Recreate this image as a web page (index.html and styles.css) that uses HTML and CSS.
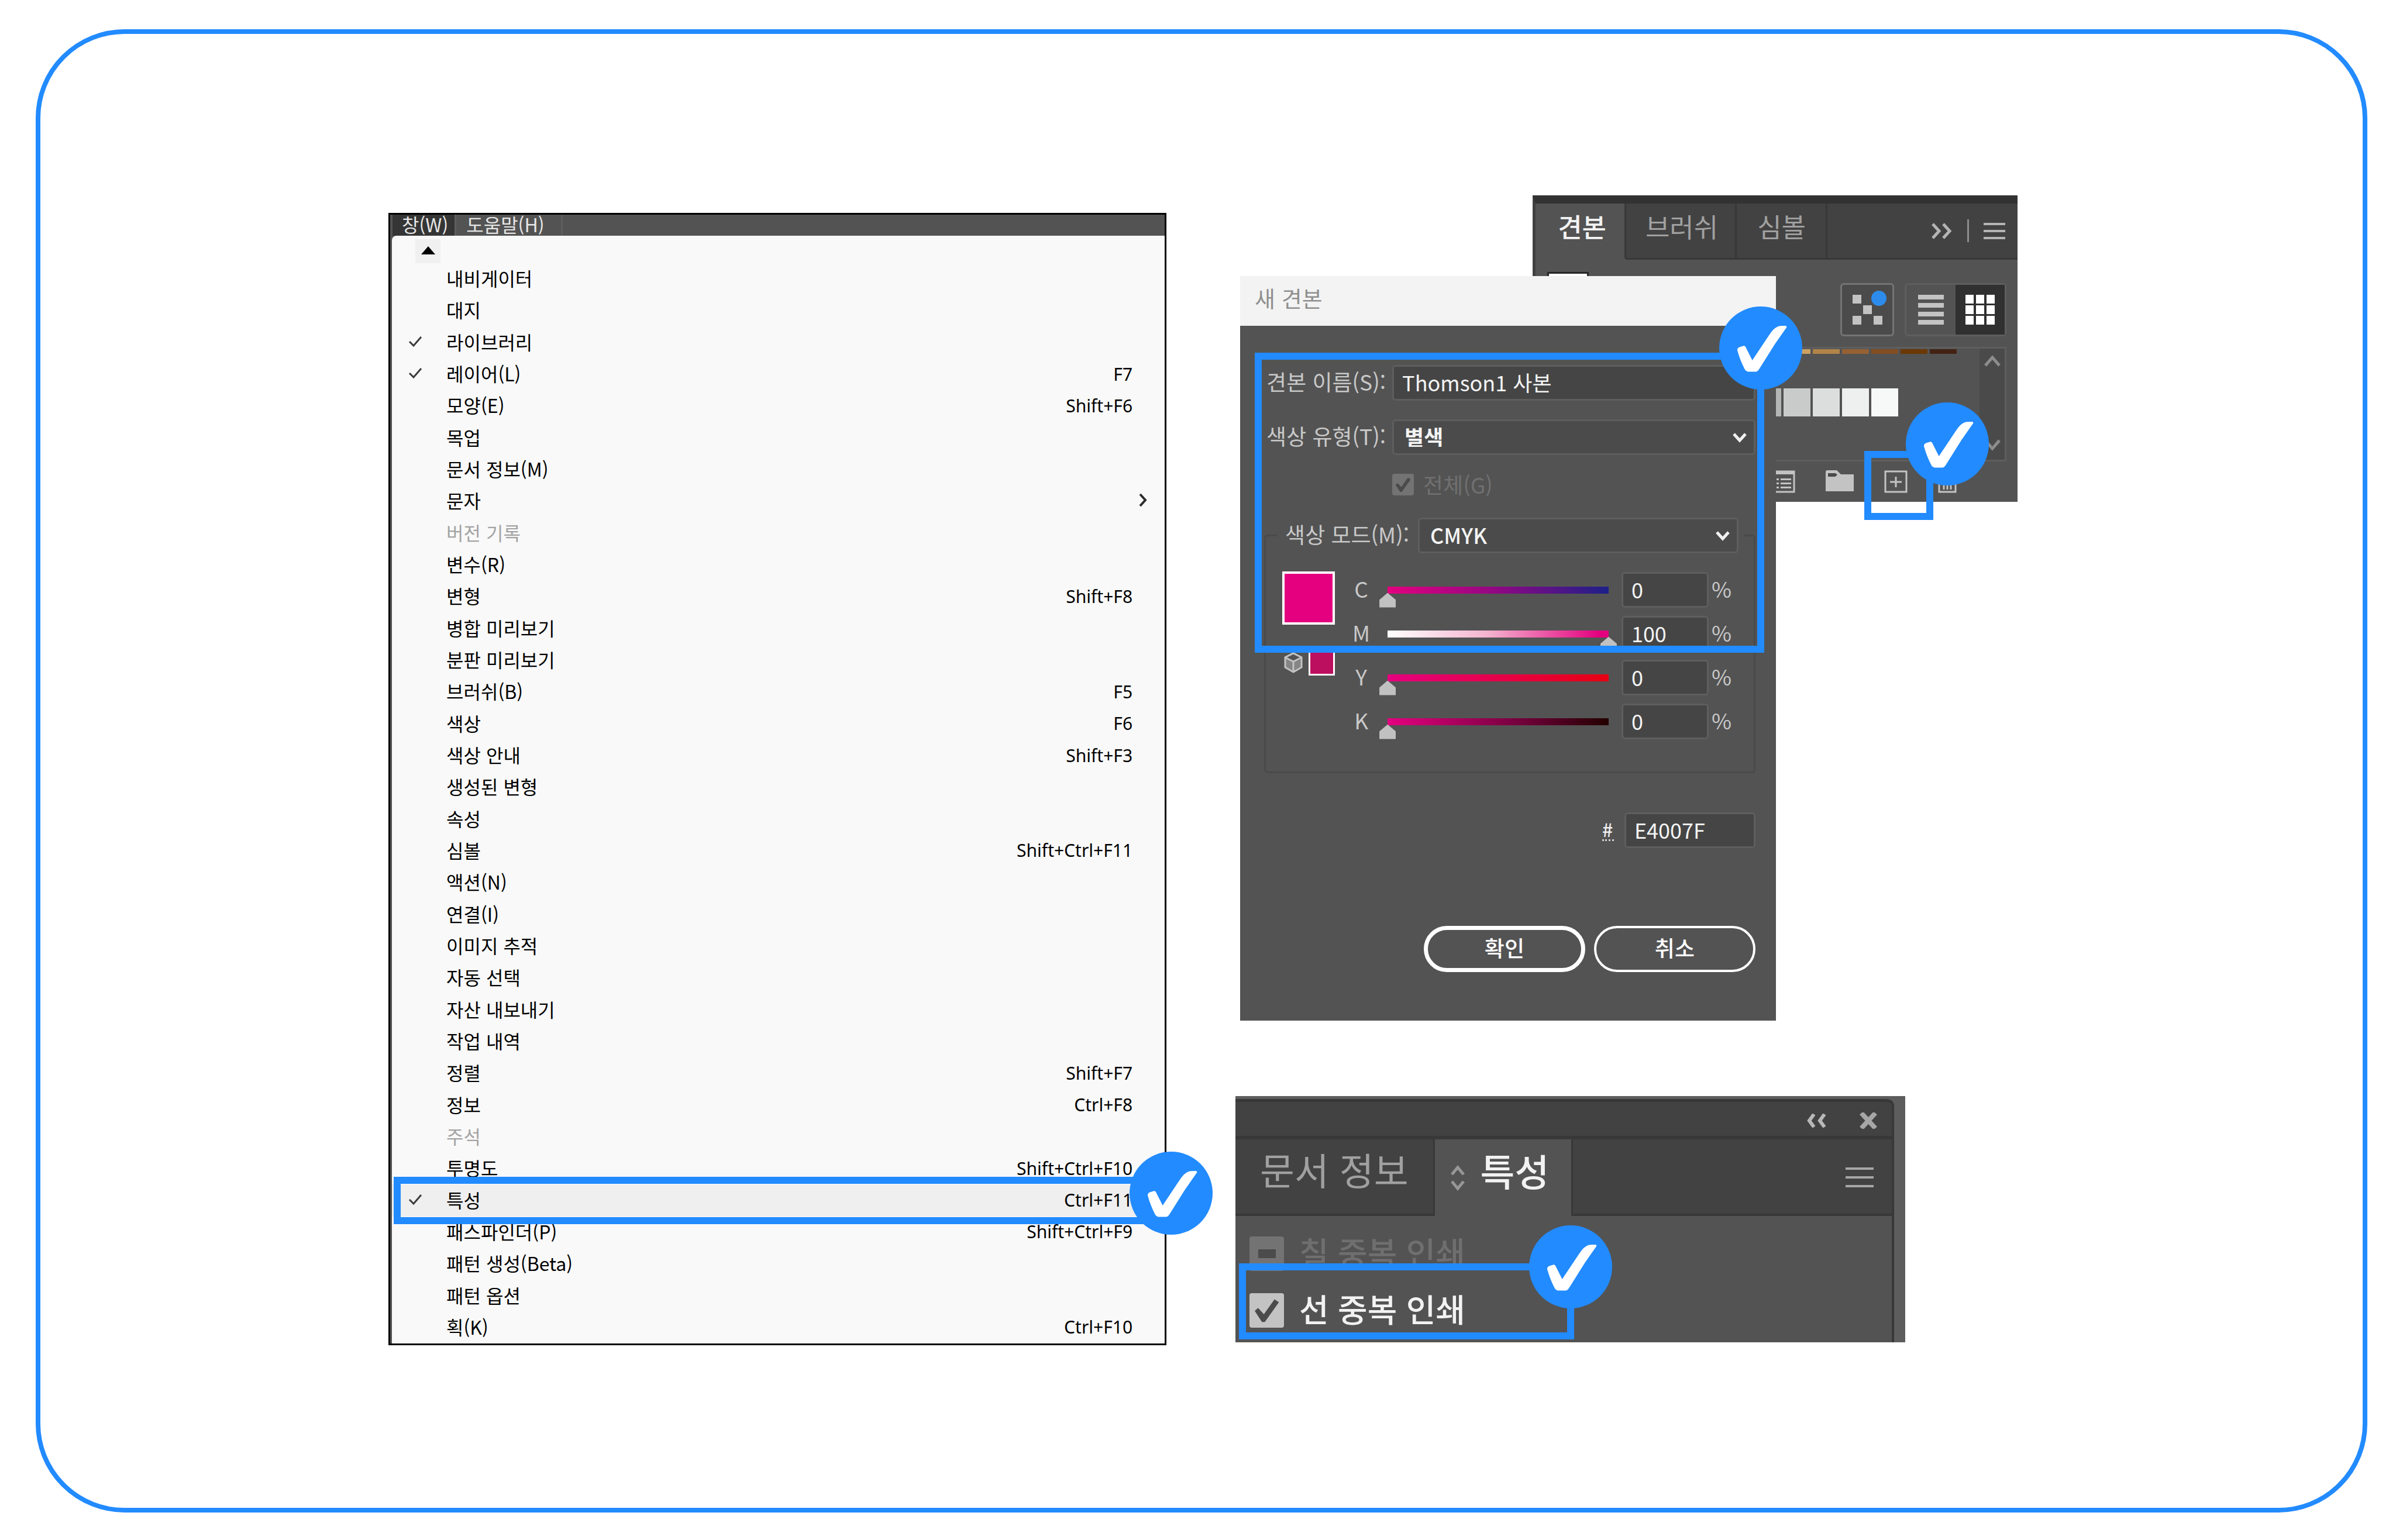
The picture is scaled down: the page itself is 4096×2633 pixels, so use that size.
FILE: index.html
```html
<!DOCTYPE html>
<html lang="ko">
<head>
<meta charset="utf-8">
<title>별색 견본과 중복 인쇄 설정</title>
<link rel="stylesheet" href="styles.css">
</head>
<body>
<svg class="defs" aria-hidden="true">
  <symbol id="badge" viewBox="0 0 142 142">
    <circle cx="71" cy="71" r="71" fill="#228bff"/>
    <path fill="#fff" d="M31 75C31 71 33 70 36 69L42 67.200Q44 67 45 69L56.600 92L86 48Q94 36 101 34Q104 33 113 33Q116 33 115 36Q108 46 95.400 64L69 106Q66 111 63 111.500H49Q46 111 44 108Q36 93 31 75Z"/>
  </symbol>
  <symbol id="tick" viewBox="0 0 24 20"><path d="M2 10L9 17L22 2" fill="none" stroke="#3c3c3c" stroke-width="3"/></symbol>
  <symbol id="down" viewBox="0 0 26 20"><path d="M3 3L13 14L23 3" fill="none" stroke="currentColor" stroke-width="5"/></symbol>
</svg>
<main class="card">
<div class="board">

  <section class="menu-window">
    <nav class="menubar">
      <button class="menubar-item is-open">창(W)</button>
      <button class="menubar-item">도움말(H)</button>
    </nav>
    <div class="menu">
      <button class="menu-scroll" aria-label="위로 스크롤"><svg width="24" height="14" viewBox="0 0 24 14"><path d="M12 0L24 14H0Z" fill="#000"/></svg></button>
      <ul class="menu-list">
        <li><button class="item"><span></span>내비게이터</button></li>
        <li><button class="item"><span></span>대지</button></li>
        <li><button class="item"><svg class="tick"><use href="#tick"/></svg>라이브러리</button></li>
        <li><button class="item"><svg class="tick"><use href="#tick"/></svg>레이어(L)<kbd>F7</kbd></button></li>
        <li><button class="item"><span></span>모양(E)<kbd>Shift+F6</kbd></button></li>
        <li><button class="item"><span></span>목업</button></li>
        <li><button class="item"><span></span>문서 정보(M)</button></li>
        <li><button class="item item-parent"><span></span>문자<svg class="more" viewBox="0 0 14 24"><path d="M2 2L11 12L2 22" fill="none" stroke="#2c2c2c" stroke-width="4"/></svg></button></li>
        <li><button class="item" disabled><span></span>버전 기록</button></li>
        <li><button class="item"><span></span>변수(R)</button></li>
        <li><button class="item"><span></span>변형<kbd>Shift+F8</kbd></button></li>
        <li><button class="item"><span></span>병합 미리보기</button></li>
        <li><button class="item"><span></span>분판 미리보기</button></li>
        <li><button class="item"><span></span>브러쉬(B)<kbd>F5</kbd></button></li>
        <li><button class="item"><span></span>색상<kbd>F6</kbd></button></li>
        <li><button class="item"><span></span>색상 안내<kbd>Shift+F3</kbd></button></li>
        <li><button class="item"><span></span>생성된 변형</button></li>
        <li><button class="item"><span></span>속성</button></li>
        <li><button class="item"><span></span>심볼<kbd>Shift+Ctrl+F11</kbd></button></li>
        <li><button class="item"><span></span>액션(N)</button></li>
        <li><button class="item"><span></span>연결(I)</button></li>
        <li><button class="item"><span></span>이미지 추적</button></li>
        <li><button class="item"><span></span>자동 선택</button></li>
        <li><button class="item"><span></span>자산 내보내기</button></li>
        <li><button class="item"><span></span>작업 내역</button></li>
        <li><button class="item"><span></span>정렬<kbd>Shift+F7</kbd></button></li>
        <li><button class="item"><span></span>정보<kbd>Ctrl+F8</kbd></button></li>
        <li><button class="item" disabled><span></span>주석</button></li>
        <li><button class="item"><span></span>투명도<kbd>Shift+Ctrl+F10</kbd></button></li>
        <li class="current"><button class="item"><svg class="tick"><use href="#tick"/></svg>특성<kbd>Ctrl+F11</kbd></button>
          <div class="mark mark-menu"><svg class="badge"><use href="#badge"/></svg></div></li>
        <li><button class="item"><span></span>패스파인더(P)<kbd>Shift+Ctrl+F9</kbd></button></li>
        <li><button class="item"><span></span>패턴 생성(Beta)</button></li>
        <li><button class="item"><span></span>패턴 옵션</button></li>
        <li><button class="item"><span></span>획(K)<kbd>Ctrl+F10</kbd></button></li>
      </ul>
    </div>
  </section>

  <div class="side">
    <div class="stack">

      <section class="swatches">
        <div class="sw-tabs">
          <button class="sw-tab is-active">견본</button>
          <button class="sw-tab">브러쉬</button>
          <button class="sw-tab">심볼</button>
          <div class="sw-tools">
            <svg width="36" height="28" viewBox="0 0 36 28" fill="none" stroke="#b4b4b4" stroke-width="5"><path d="M2 2L13 14L2 26M20 2L31 14L20 26"/></svg>
            <i class="divider"></i>
            <svg width="37" height="28" viewBox="0 0 37 28" fill="#b4b4b4"><path d="M0 0H37V4H0ZM0 12H37V16H0ZM0 24H37V28H0Z"/></svg>
          </div>
        </div>
        <div class="sw-toolbar">
          <i class="fill-chip"></i>
          <button class="tool tool-library" aria-label="라이브러리에 추가"><svg width="92" height="91" viewBox="0 0 92 91"><g fill="#c3c3c3"><path d="M21 20H36V35H21ZM39 38H54V53H39ZM21 56H36V71H21ZM57 56H72V71H57Z"/></g><circle cx="66" cy="26" r="13" fill="#2d8ceb"/></svg></button>
          <div class="views">
            <button class="view" aria-label="목록 보기"><svg width="44" height="52" viewBox="0 0 44 52" fill="#c3c3c3"><path d="M0 0H44V8H0ZM0 14H44V22H0ZM0 29H44V37H0ZM0 43H44V51H0Z"/></svg></button>
            <button class="view is-on" aria-label="격자 보기"><svg width="50" height="51" viewBox="0 0 50 51" fill="#fff"><path d="M0 0H14V15H0ZM18 0H32V15H18ZM36 0H50V15H36ZM0 18H14V33H0ZM18 18H32V33H18ZM36 18H50V33H36ZM0 36H14V51H0ZM18 36H32V51H18ZM36 36H50V51H36Z"/></svg></button>
          </div>
        </div>
        <div class="sw-list">
          <div class="chips">
            <i class="brown-1"></i><i class="brown-1"></i><i class="brown-2"></i><i class="brown-3"></i><i class="brown-4"></i><i class="brown-5"></i><i class="brown-6"></i><i class="brown-7"></i>
            <i class="gray-1"></i><i class="gray-1"></i><i class="gray-2"></i><i class="gray-3"></i><i class="gray-4"></i><i class="gray-5"></i>
          </div>
          <div class="track">
            <svg width="30" height="20" viewBox="0 0 30 20"><path d="M3 18L15 4L27 18" fill="none" stroke="#8c8c8c" stroke-width="5"/></svg>
            <svg width="30" height="20" viewBox="0 0 30 20"><path d="M3 2L15 16L27 2" fill="none" stroke="#8c8c8c" stroke-width="5"/></svg>
          </div>
        </div>
        <div class="sw-foot">
          <button class="foot" aria-label="견본 옵션"><svg width="40" height="39" viewBox="0 0 40 39"><path d="M2 2H38V37H2Z" fill="none" stroke="#c3c3c3" stroke-width="3"/><path d="M2 1H38V7H2ZM8 14H12V17H8ZM15 14H33V17H15ZM8 21H12V24H8ZM15 21H33V24H15ZM8 28H12V31H8ZM15 28H33V31H15Z" fill="#c3c3c3"/></svg></button>
          <button class="foot" aria-label="새 색상 그룹"><svg width="48" height="39" viewBox="0 0 48 39"><path d="M0 3Q0 0 3 0H19L26 7H48V36H0Z" fill="#c3c3c3"/><path d="M4 5H17L20 8L16 11H4Z" fill="#4a4a4a"/></svg></button>
          <button class="foot foot-new" aria-label="새 견본"><svg width="40" height="39" viewBox="0 0 40 39"><path d="M2 2H38V37H2Z M20 11V29M10 20H30" fill="none" stroke="#c3c3c3" stroke-width="3"/></svg>
            <span class="mark mark-new"><svg class="badge"><use href="#badge"/></svg></span></button>
          <button class="foot" aria-label="견본 삭제"><svg width="32" height="39" viewBox="0 0 32 39"><path d="M0 8H32M2 8V37H30V8M10 14V33M16 14V33M22 14V33M10 7V2H22V7" fill="none" stroke="#c3c3c3" stroke-width="3"/></svg></button>
        </div>
      </section>

      <form class="dialog" onsubmit="return false">
        <h2 class="dialog-title">새 견본</h2>
        <div class="dialog-body">
          <div class="row"><label for="name">견본 이름(S):</label><input class="field" id="name" value="Thomson1 사본"></div>
          <div class="row"><label for="type">색상 유형(T):</label>
            <div class="pick"><select class="field strong" id="type"><option>별색</option></select><svg class="caret"><use href="#down"/></svg></div></div>
          <div class="row row-check"><span></span><label class="global"><input type="checkbox" class="box" checked disabled>전체(G)</label></div>
          <fieldset class="mode">
            <legend><span class="mode-head"><label for="mode">색상 모드(M):</label>
              <span class="pick"><select class="field medium" id="mode"><option>CMYK</option></select><svg class="caret"><use href="#down"/></svg></span></span></legend>
            <div class="mixer">
              <div class="preview">
                <i class="chip-big"></i>
                <div class="gamut"><svg width="34" height="36" viewBox="0 0 34 36"><path d="M17 2L31 9V26L17 34L3 26V9Z" fill="#858585" stroke="#c3c3c3" stroke-width="3"/><path d="M3 9L17 2L31 9L17 16Z" fill="#535353"/><path d="M3 9L17 16L31 9M17 16V34M3 9L17 2L31 9" fill="none" stroke="#c3c3c3" stroke-width="3"/></svg><i class="chip-small"></i></div>
              </div>
              <div class="channels">
                <div class="channel"><label for="c">C</label><input type="range" class="ramp ramp-c" value="0" aria-label="C"><input class="field" id="c" value="0"><span>%</span></div>
                <div class="channel"><label for="m">M</label><input type="range" class="ramp ramp-m" value="100" aria-label="M"><input class="field" id="m" value="100"><span>%</span></div>
                <div class="channel"><label for="y">Y</label><input type="range" class="ramp ramp-y" value="0" aria-label="Y"><input class="field" id="y" value="0"><span>%</span></div>
                <div class="channel"><label for="k">K</label><input type="range" class="ramp ramp-k" value="0" aria-label="K"><input class="field" id="k" value="0"><span>%</span></div>
              </div>
            </div>
          </fieldset>
          <div class="hex"><label for="hex">#</label><input class="field" id="hex" value="E4007F"></div>
          <div class="actions"><button class="pill pill-ok">확인</button><button class="pill" type="button">취소</button></div>
        </div>
        <div class="mark mark-dialog"><svg class="badge"><use href="#badge"/></svg></div>
      </form>
    </div>

    <section class="attributes">
      <div class="at-frame">
        <div class="at-head">
          <svg width="36" height="24" viewBox="0 0 36 24" fill="none" stroke="#b8b8b8" stroke-width="6"><path d="M13 1L5 12L13 23M31 1L23 12L31 23"/></svg>
          <svg width="32" height="28" viewBox="0 0 32 28" fill="none" stroke="#a6a6a6" stroke-width="8"><path d="M4 1L28 27M28 1L4 27"/></svg>
        </div>
        <div class="at-tabs">
          <button class="at-tab">문서 정보</button>
          <button class="at-tab is-active"><svg width="26" height="46" viewBox="0 0 26 46" fill="none" stroke="#979797" stroke-width="5"><path d="M3 17L13 5L23 17M3 29L13 41L23 29"/></svg>특성</button>
          <svg class="at-burger" width="48" height="35" viewBox="0 0 48 35" fill="#a6a6a6"><path d="M0 0H48V4H0ZM0 15H48V19H0ZM0 30H48V34H0Z"/></svg>
        </div>
        <div class="at-body">
          <div class="over is-off"><input type="checkbox" class="box box-mixed" id="fill-over" disabled><label for="fill-over">칠 중복 인쇄</label></div>
          <div class="over"><input type="checkbox" class="box box-on" id="line-over" checked><label for="line-over">선 중복 인쇄</label>
            <div class="mark mark-over"><svg class="badge"><use href="#badge"/></svg></div></div>
        </div>
      </div>
    </section>
  </div>

</div>
</main>
</body>
</html>
```
FILE: styles.css
```css
*, *::before, *::after { box-sizing: border-box; }
body {
  margin: 0; min-height: 100vh; padding: 50px 49px 47px 61px; display: flex;
  background: #fff; color: #000; font-family: "Noto Sans CJK KR", sans-serif; font-size: 32px; line-height: 1;
}
button, input, select { font: inherit; color: inherit; margin: 0; border: 0; padding: 0; background: none; border-radius: 0; }
svg, i { display: block; flex: none; }
.defs { position: absolute; width: 0; height: 0; }
.card { flex: 1; border: 8px solid #228bff; border-radius: 152px; padding: 276px 14.8% 0 14.93%; }
.board { display: grid; grid-template-columns: 1330fr 1337fr; column-gap: 118px; }

/* highlight boxes */
.mark { position: absolute; z-index: 5; border: 12px solid #228bff; pointer-events: none; }
.badge { position: absolute; width: 142px; height: 142px; }

/* window menu */
.menu-window { margin-top: 30px; border: 3px solid #000; background: #535353; display: flex; flex-direction: column; }
.menubar { display: flex; height: 36px; padding-left: 4px; color: #e6e6e6; }
.menubar-item { height: 36px; padding: 0 11px 4px 16px; border-right: 3px solid #5e5e5e; }
.menubar-item + .menubar-item { padding: 0 28px 4px 17px; }
.menubar-item.is-open { background: #353535; }
.menu { flex: 1; display: flex; flex-direction: column; margin-left: 3px; background: #f9f9f9; border-top-left-radius: 8px; }
.menu-scroll { width: 43px; height: 41px; margin: 6px 0 0 40px; padding-bottom: 4px; background: #f0f0f0; display: grid; place-items: center; }
.menu-list { flex: 1; margin: 0; padding: 0; list-style: none; display: grid; grid-auto-rows: 1fr; }
.menu-list li { position: relative; display: grid; }
.item { display: grid; grid-template-columns: 65px 1fr auto; align-items: center; padding: 0 55px 4px 28px; text-align: left; }
.item:disabled { color: #a3a3a3; }
.item kbd { padding-top: 3px; font-family: "Noto Sans", sans-serif; font-size: 30px; }
.item-parent { padding-right: 30px; }
.tick { width: 24px; height: 20px; }
.more { width: 14px; height: 24px; }
.current .item { background: #efefef; }
.mark-menu { inset: -13px 6px -13px 3px; }
.mark-menu .badge { right: -100px; top: -55px; }

/* right column */
.side { padding-bottom: 5px; }
.stack { display: grid; align-items: start; }
.swatches, .dialog { grid-area: 1 / 1; }

/* swatches panel */
.swatches { justify-self: end; width: 62%; background: #535353; border-left: 5px solid #404040; border-top: 14px solid #323232; }
.sw-tabs { display: flex; height: 96px; background: #424242; font-size: 45px; color: #a0a0a0; }
.sw-tab { padding: 0 28px 16px; border-right: 3px solid #383838; border-bottom: 3px solid #383838; }
.sw-tab:nth-child(1) { padding: 0 31px 16px 38px; }
.sw-tab:nth-child(2) { padding: 0 29px 16px 33px; }
.sw-tab:nth-child(3) { padding: 0 34px 16px 35px; }
.sw-tab.is-active { background: #535353; color: #f2f2f2; border-bottom-color: #535353; font-weight: 500; }
.sw-tools { flex: 1; display: flex; justify-content: flex-end; align-items: center; gap: 25px; padding-right: 21px; border-bottom: 3px solid #383838; }
.divider { width: 3px; height: 39px; background: #8c8c8c; }
.sw-toolbar { display: flex; padding: 21px 19px 0 20px; }
.fill-chip { width: 71px; height: 80px; margin-right: auto; background: #fff; border: 3px solid #262626; }
.tool { width: 92px; height: 91px; margin: 19px 18px 0 0; border: 3px solid #747474; border-radius: 6px; background: #4b4b4b; display: grid; place-items: center; }
.tool svg { margin: -3px; }
.views { width: 174px; height: 91px; margin-top: 19px; display: flex; border: 3px solid #5e5e5e; border-radius: 6px; }
.view { flex: 1; display: grid; place-items: center; }
.view.is-on { background: #303030; }
.sw-list { margin: 18px 19px 0 20px; height: 196px; display: flex; border: 3px solid #5e5e5e; }
.chips { flex: 1; display: grid; grid-template: 8px 48px / repeat(8, 46px); gap: 59px 4px; justify-content: end; align-content: start; padding: 1px 39px 0 0; }
.brown-1 { background: #d6ac6c; }
.brown-2 { background: #caa163; }
.brown-3 { background: #b18448; }
.brown-4 { background: #956134; }
.brown-5 { background: #824e22; }
.brown-6 { background: #6a3906; }
.brown-7 { background: #432213; }
.gray-1 { background: #b4b5b5; }
.gray-2 { background: #c9caca; }
.gray-3 { background: #dcdddd; }
.gray-4 { background: #eeefef; }
.gray-5 { background: #f7f8f8; }
.track { width: 43px; background: #4a4a4a; display: flex; flex-direction: column; justify-content: space-between; align-items: center; padding: 11px 0 15px; }
.sw-foot { display: flex; justify-content: flex-end; gap: 52px; padding: 15px 104px 15px 0; }
.foot { position: relative; }
.mark-new { width: 118px; height: 118px; left: -34px; top: -33px; }
.mark-new .badge { right: -107px; top: -95px; }

/* new swatch dialog */
.dialog { position: relative; z-index: 1; width: 68.5%; margin: 138px 0 0 8px; background: #535353; color: #c8c8c8; font-size: 37px; }
.dialog-title { margin: 0; height: 85px; padding: 0 25px 12px; display: flex; align-items: center; background: #f3f3f3; color: #8f8f8f; font-size: 38px; font-weight: 400; }
.dialog-body { padding: 67px 35px 83px 41px; }
.row { display: grid; grid-template-columns: 215px 1fr; align-items: center; padding-left: 4px; margin-bottom: 32px; }
.row label, .mode-head label { padding-bottom: 4px; }
.field { display: block; width: 100%; height: 61px; padding: 0 14px 4px; background: #454545; border: 3px solid #5e5e5e; border-radius: 6px; color: #f4f4f4; font-size: 36px; }
select.field { appearance: none; background: #4b4b4b; padding-left: 18px; }
.strong { font-weight: 700; }
.medium { font-weight: 500; }
.pick { position: relative; display: block; }
.caret { position: absolute; right: 14px; top: 22px; width: 26px; height: 20px; color: #f0f0f0; pointer-events: none; }
.row-check { margin-bottom: 38px; }
.row .global { display: flex; align-items: center; gap: 16px; padding: 0; color: #707070; }
.box { appearance: none; flex: none; width: 37px; height: 37px; background: #737373; border-radius: 4px; display: grid; place-items: center; }
.box::before { content: ""; width: 70%; height: 70%; background: #4b4b4b; clip-path: polygon(0 52%, 14% 40%, 38% 66%, 82% 4%, 100% 16%, 42% 98%, 30% 98%); }
.mode { margin: 0; min-width: 0; border: 3px solid #4a4a4a; border-radius: 6px; padding: 25px 0 48px 28px; }
.mode legend { width: calc(100% - 8px); margin-left: -9px; padding: 0 9px 0 14px; }
.mode-head { display: grid; grid-template-columns: 227px 1fr; align-items: center; }
.mixer { display: flex; gap: 22px; }
.preview { width: 90px; padding-top: 6px; }
.chip-big { width: 90px; height: 91px; background: #e4007f; border: 4px solid #fff; }
.gamut { display: flex; justify-content: space-between; align-items: center; margin-top: 42px; padding-left: 2px; }
.chip-small { width: 45px; height: 45px; background: #bd0f5f; border: 3px solid #fff; }
.channels { flex: 1; min-width: 0; }
.channel { display: grid; grid-template-columns: 46px minmax(0, 1fr) 149px 69px; column-gap: 8px; height: 75px; align-items: center; }
.channel label, .channel span { padding-bottom: 4px; }
.channel label { text-align: center; }
.channel span { margin-left: -3px; }
.ramp { appearance: none; width: 100%; height: 12px; }
.ramp::-webkit-slider-runnable-track { height: 12px; background: var(--ramp) no-repeat center / calc(100% - 28px) 100%; }
.ramp::-webkit-slider-thumb { appearance: none; width: 28px; height: 25px; margin-top: 11px; background: #c1c1c1; clip-path: polygon(50% 0, 62% 12%, 100% 48%, 100% 100%, 0 100%, 0 48%, 38% 12%); }
.ramp-c { --ramp: linear-gradient(90deg, #e4007f, #930783 48%, #1d2088); }
.ramp-m { --ramp: linear-gradient(90deg, #fff, #f4b4cf 45%, #e4007f 96%); }
.ramp-y { --ramp: linear-gradient(90deg, #e4007f, #e60012); }
.ramp-k { --ramp: linear-gradient(90deg, #e4007f, #7d0043 55%, #230000); }
.hex { display: grid; grid-template-columns: 20px 224px; column-gap: 18px; justify-content: end; align-items: center; margin-top: 67px; color: #f0f0f0; }
.hex label { padding-bottom: 2px; border-bottom: 3px dotted #d0d0d0; font-size: 32px; font-weight: 500; }
.actions { display: flex; justify-content: flex-end; gap: 15px; margin-top: 133px; }
.pill { width: 276px; height: 79px; padding-bottom: 4px; border: 4px solid #fff; border-radius: 40px; color: #fff; font-weight: 500; }
.pill-ok { border-width: 7px; }
.mark-dialog { left: 25px; right: 20px; top: 131px; height: 513px; }
.mark-dialog .badge { right: -77px; top: -91px; }

/* attributes panel */
.attributes { width: 85.6%; margin-top: 129px; padding: 5px 19px 0 0; background: #5d5d5d; color: #f2f2f2; }
.at-frame { border-right: 4px solid #383838; border-top-right-radius: 12px; background: #535353; }
.at-head { height: 69px; display: flex; justify-content: flex-end; align-items: center; gap: 54px; padding: 6px 24px 0; background: #424242; border-top: 5px solid #383838; border-bottom: 6px solid #383838; border-top-right-radius: 10px; }
.at-tabs { height: 131px; display: flex; background: #424242; font-size: 64px; color: #a0a0a0; border-bottom: 4px solid #383838; }
.at-tab { padding: 0 42px 28px; border-right: 3px solid #383838; }
.at-tab.is-active { display: flex; align-items: center; gap: 26px; padding: 0 38px 28px 26px; margin-bottom: -4px; background: #535353; color: #f2f2f2; font-weight: 500; }
.at-tab.is-active svg { margin-top: 28px; }
.at-burger { margin: 48px 31px 0 auto; }
.at-body { padding: 35px 24px 25px; display: grid; gap: 38px; font-size: 55px; }
.over { position: relative; display: flex; height: 59px; align-items: center; gap: 26px; font-weight: 500; }
.over label { padding-bottom: 8px; }
.over .box { width: 59px; height: 59px; }
.is-off { color: #6f6f6f; }
.box-mixed::before { width: 30px; height: 15px; clip-path: none; }
.box-on { background: #c3c3c3; }
.mark-over { left: -18px; top: -51px; bottom: -20px; width: 573px; }
.mark-over .badge { right: -77px; top: -77px; }
```
